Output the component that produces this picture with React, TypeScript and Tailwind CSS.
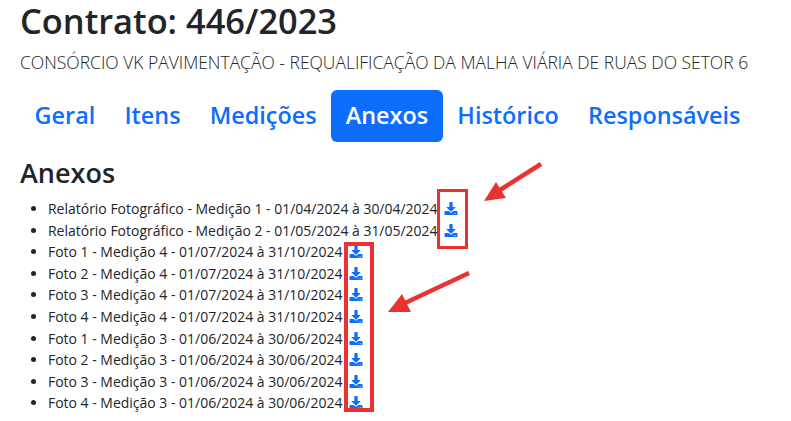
import { FaDownload } from "react-icons/fa";

const rows = [
  "Relatório Fotográfico - Medição 1 - 01/04/2024 à 30/04/2024",
  "Relatório Fotográfico - Medição 2 - 01/05/2024 à 31/05/2024",
  "Foto 1 - Medição 4 - 01/07/2024 à 31/10/2024",
  "Foto 2 - Medição 4 - 01/07/2024 à 31/10/2024",
  "Foto 3 - Medição 4 - 01/07/2024 à 31/10/2024",
  "Foto 4 - Medição 4 - 01/07/2024 à 31/10/2024",
  "Foto 1 - Medição 3 - 01/06/2024 à 30/06/2024",
  "Foto 2 - Medição 3 - 01/06/2024 à 30/06/2024",
  "Foto 3 - Medição 3 - 01/06/2024 à 30/06/2024",
  "Foto 4 - Medição 3 - 01/06/2024 à 30/06/2024",
];
const tabs = ["Geral", "Itens", "Medições", "Anexos", "Histórico", "Responsáveis"];

export default function App() {
  return (
    <div className="relative w-[791px] h-[421px] overflow-hidden bg-white text-[#212529] pl-5 font-['Open_Sans','Noto_Sans',sans-serif]">
      <h1 className="text-[34.4px] leading-[40px] font-semibold mt-[1px] whitespace-nowrap">Contrato: 446/2023</h1>
      <p className="text-[17.48px] leading-[24px] font-light mt-[9px] whitespace-nowrap">CONSÓRCIO VK PAVIMENTAÇÃO - REQUALIFICAÇÃO DA MALHA VIÁRIA DE RUAS DO SETOR 6</p>
      <nav className="flex mt-[16px]">
        {tabs.map((t) => (
          <a key={t} className={`h-[52px] px-[14.6px] flex items-center rounded-[6px] text-[23.4px] font-semibold whitespace-nowrap ${t === "Anexos" ? "bg-[#0d6efd] text-white" : "text-[#0d6efd]"}`}>{t}</a>
        ))}
      </nav>
      <h2 className="text-[27px] leading-[32px] font-semibold mt-[15px]">Anexos</h2>
      <ul className="list-disc pl-[28px] mt-[9px] text-[13.97px] leading-[21.6px]">
        {rows.map((r) => (
          <li key={r} className="whitespace-nowrap">
            {r} <FaDownload className="inline-block align-[-1px] ml-[3px] text-[#0d6efd] w-[14px] h-[13px]" />
          </li>
        ))}
      </ul>
      <div className="absolute left-[437px] top-[189px] w-[31px] h-[60px] border-[3px] border-[#ea3232]" />
      <div className="absolute left-[344px] top-[242px] w-[30px] h-[170px] border-[4px] border-[#ea3232]" />
      <svg className="absolute left-0 top-0 pointer-events-none" width="791" height="421" viewBox="0 0 791 421">
        <line x1="541" y1="164" x2="500" y2="190" stroke="#ea3232" strokeWidth="4.5" />
        <polygon points="484,201 496,182 506,198" fill="#ea3232" />
        <line x1="469" y1="273" x2="405" y2="303" stroke="#ea3232" strokeWidth="4.5" />
        <polygon points="388,312 402,294 411,312" fill="#ea3232" />
      </svg>
    </div>
  );
}
